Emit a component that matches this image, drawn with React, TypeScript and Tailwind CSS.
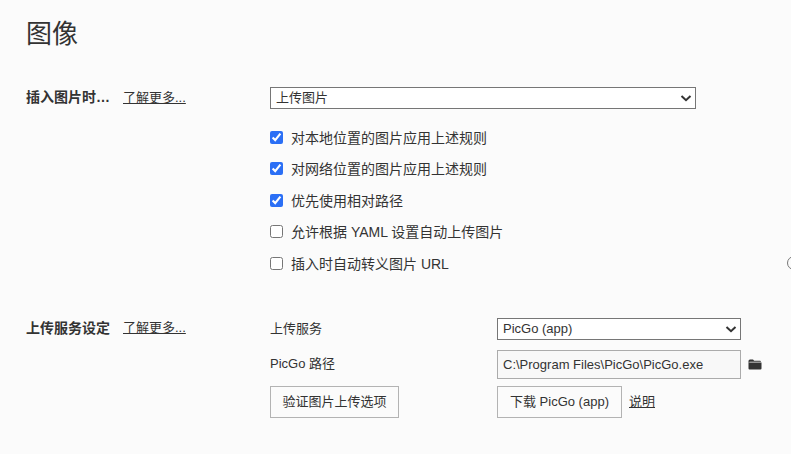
import React from 'react';

const checks = [
  { label: '对本地位置的图片应用上述规则', checked: true },
  { label: '对网络位置的图片应用上述规则', checked: true },
  { label: '优先使用相对路径', checked: true },
  { label: '允许根据 YAML 设置自动上传图片', checked: false },
  { label: '插入时自动转义图片 URL', checked: false },
];

const LearnMore = () => (
  <a className="underline text-[13px] text-[#333] cursor-pointer" href="#">了解更多...</a>
);

const Select = ({ value, width }: { value: string; width: string }) => (
  <div className={`relative h-[22px] ${width}`}>
    <select className="block w-full h-full appearance-none rounded-none border border-[#767676] bg-white pl-[5px] text-[13px] text-[#333]">
      <option>{value}</option>
    </select>
    <svg className="absolute right-[4px] top-[6px] w-[12px] h-[10px]" viewBox="0 0 12 10" fill="none">
      <path d="M1.5 3 L6 7.2 L10.5 3" stroke="#333" strokeWidth="2" />
    </svg>
  </div>
);

export default function App() {
  return (
    <div className='font-["Liberation_Sans","Noto_Sans_CJK_SC",sans-serif] relative w-[791px] h-[454px] overflow-hidden bg-[#fbfbfb] text-[14px] text-[#333] pl-[26px] pt-[14px]'>
      <h1 className="text-[26px] leading-[40px] font-normal">图像</h1>

      {/* Insert image */}
      <section className="flex mt-[33px]">
        <div className="w-[244px] shrink-0 flex gap-[13px] h-[21px] items-center">
          <span className="font-bold">插入图片时…</span>
          <LearnMore />
        </div>
        <div>
          <Select value="上传图片" width="w-[426px]" />
          <div className="flex flex-col gap-[10.4px] mt-[19px]">
            {checks.map((c) => (
              <label key={c.label} className="flex items-center gap-[8px] h-[21px]">
                <input type="checkbox" defaultChecked={c.checked} className="w-[13px] h-[13px] m-0 -translate-y-[1px] accent-[#2b6ff5]" />
                <span>{c.label}</span>
              </label>
            ))}
          </div>
        </div>
      </section>

      {/* partly cut-off help icon at the window edge */}
      <div className="absolute left-[787px] top-[256px] w-[14px] h-[14px] rounded-full border border-[#777]" />

      {/* Upload service */}
      <section className="flex mt-[43px]">
        <div className="w-[244px] shrink-0 flex gap-[13px] h-[21px] items-center">
          <span className="font-bold">上传服务设定</span>
          <LearnMore />
        </div>
        <div className="flex flex-col text-[13px]">
          <div className="flex items-center h-[22px]">
            <span className="w-[227px]">上传服务</span>
            <Select value="PicGo (app)" width="w-[244px]" />
          </div>
          <div className="flex items-center mt-[10px]">
            <span className="w-[227px]">PicGo 路径</span>
            <input
              readOnly
              value="C:\Program Files\PicGo\PicGo.exe"
              className="w-[244px] h-[29px] border border-[#ababab] bg-[#f8f8f8] px-[5px] text-[13px] text-[#333] outline-none"
            />
            <svg className="ml-[8px] w-[14px] h-[11px] -translate-x-[1px]" viewBox="0 0 14 11">
              <path d="M0.5 2 Q0.5 0.5 2 0.5 H5 L6.2 1.7 H12 Q13 1.7 13 2.7 H1.5 V3.5 H0.5 Z" fill="#333" />
              <path d="M0.5 3.6 H13.5 V9.5 Q13.5 10.5 12.5 10.5 H1.5 Q0.5 10.5 0.5 9.5 Z" fill="#333" />
            </svg>
          </div>
          <div className="flex items-center mt-[7px]">
            <button className="w-[129px] h-[32px] border border-[#b3b3b3] text-[#333] mr-[98px]">验证图片上传选项</button>
            <button className="w-[125px] h-[32px] border border-[#b3b3b3] text-[#333]">下载 PicGo (app)</button>
            <a className="ml-[7px] underline text-[#333]" href="#">说明</a>
          </div>
        </div>
      </section>
    </div>
  );
}
